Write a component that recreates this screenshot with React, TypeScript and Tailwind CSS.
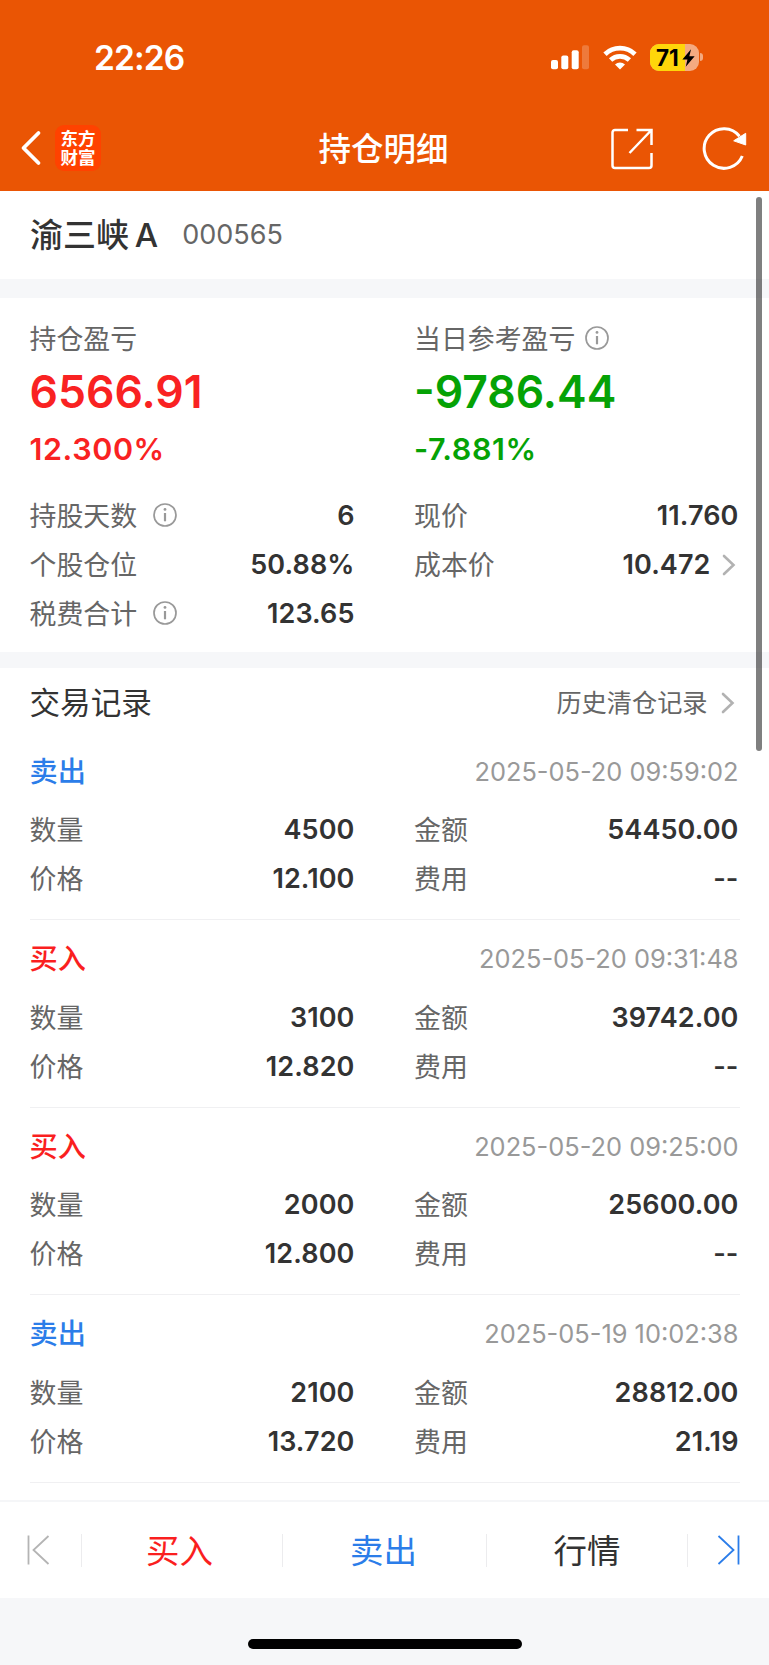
import type { ReactNode } from "react"
import clsx from "clsx"

interface TradeRecord {
  side: "buy" | "sell"
  time: string
  quantity: string
  amount: string
  price: string
  fee: string
}

const records: TradeRecord[] = [
  { side: "sell", time: "2025-05-20 09:59:02", quantity: "4500", amount: "54450.00", price: "12.100", fee: "--" },
  { side: "buy", time: "2025-05-20 09:31:48", quantity: "3100", amount: "39742.00", price: "12.820", fee: "--" },
  { side: "buy", time: "2025-05-20 09:25:00", quantity: "2000", amount: "25600.00", price: "12.800", fee: "--" },
  { side: "sell", time: "2025-05-19 10:02:38", quantity: "2100", amount: "28812.00", price: "13.720", fee: "21.19" },
]

function InfoIcon({ className }: { className?: string }) {
  return (
    <svg viewBox="0 0 24 24" className={clsx("w-6 h-6 shrink-0", className)} fill="none" stroke="#999">
      <circle cx="12" cy="12" r="11" strokeWidth="1.7" />
      <path d="M12 10v8.3" strokeWidth="2.2" />
      <circle cx="12" cy="6.4" r="1.4" fill="#999" stroke="none" />
    </svg>
  )
}

function Chevron({ className }: { className?: string }) {
  return (
    <svg
      viewBox="0 0 14 22"
      className={clsx("w-[14px] h-[22px] shrink-0 mr-1", className)}
      fill="none"
      stroke="#b2b2b2"
      strokeWidth="2.6"
      strokeLinecap="round"
    >
      <path d="M2 2l9.5 9L2 20" />
    </svg>
  )
}

function Row({ label, value, info, link }: { label: string; value: string; info?: boolean; link?: boolean }) {
  return (
    <div className="flex items-center h-[49px]">
      <span className="pt-px text-[26.9px] leading-[48px] text-[#666]">{label}</span>
      {info && <InfoIcon className="ml-4 -mt-px" />}
      <span className="ml-auto mr-px text-[27px] leading-[49px] font-semibold tracking-[0.1px] text-[#333]">{value}</span>
      {link && <Chevron className="ml-[10px]" />}
    </div>
  )
}

function StatusBar() {
  return (
    <div className="flex items-center h-[114px]">
      <span className="ml-[94px] pt-px text-[33.5px] leading-[40px] font-semibold tracking-[-0.9px]">22:26</span>
      <svg viewBox="0 0 40 26" className="w-10 h-[26px] ml-auto" fill="#fff">
        <rect x="1" y="16" width="7" height="9.3" rx="2" />
        <rect x="11.3" y="11.5" width="7" height="13.8" rx="2" />
        <rect x="21.7" y="6.3" width="7" height="19" rx="2" />
        <rect x="32" y="1.2" width="7" height="24.1" rx="2" opacity="0.22" />
      </svg>
      <svg viewBox="0 0 34 25" className="w-[34px] h-[25px] ml-[13px]" fill="none" stroke="#fff" strokeWidth="4.8">
        <path d="M2 9.2a21.8 21.8 0 0 1 30 0" />
        <path d="M7.6 15.1a13.8 13.8 0 0 1 18.8 0" />
        <path d="M17 24.6l-5-5.1a7.2 7.2 0 0 1 10 0z" fill="#fff" stroke="none" />
      </svg>
      <div className="relative flex items-center w-[49px] h-[27px] ml-[13px] rounded-[9px] overflow-hidden bg-[#f4aa81]">
        <div className="absolute inset-y-0 left-0 w-[35px] bg-[#ffd60a]" />
        <span className="relative ml-[6px] text-[22.5px] leading-[27px] font-bold text-black">71</span>
        <svg viewBox="0 0 12 17" className="absolute left-[31.5px] top-[5px] w-[13px] h-[18px]" fill="#000">
          <path d="M8.4.3L.2 9.8h4.8L3.4 16.7l8.4-9.8H6.8z" />
        </svg>
      </div>
      <div className="w-[3px] h-[8px] ml-[1px] mr-[66px] rounded-r-full bg-[#f4aa81]" />
    </div>
  )
}

function NavBar() {
  return (
    <div className="relative flex items-center h-[77px] pb-[9px]">
      <svg viewBox="0 0 22 36" className="w-[22px] h-9 ml-5" fill="none" stroke="#fff" strokeWidth="3.8" strokeLinecap="round" strokeLinejoin="round">
        <path d="M18.5 3L3.500 18l15 15" />
      </svg>
      <div className="flex flex-col items-center justify-center w-[46px] h-[46px] ml-[13px] rounded-[9px] bg-[#ff4200] text-[17.5px] leading-[19px] font-bold">
        <span>东方</span>
        <span>财富</span>
      </div>
      <h1 className="absolute inset-x-0 pt-[3px] pr-[2px] text-center text-[32.5px] leading-[68px] font-medium pointer-events-none">持仓明细</h1>
      <svg viewBox="0 0 42 42" className="w-[42px] h-[42px] ml-auto mt-px" fill="none" stroke="#fff" strokeWidth="2.5">
        <path d="M17 2H4a2.5 2.5 0 0 0-2.5 2.5v33A2.5 2.5 0 0 0 4 40h34a2.5 2.5 0 0 0 2.5-2.5V25" />
        <path d="M25.5 2h15v15M40 2.5L18.5 25" />
      </svg>
      <svg viewBox="0 0 46 44" className="w-[46px] h-11 ml-[49px] mr-[21px]" fill="none" stroke="#fff" strokeWidth="3">
        <path d="M40.3 30A19.8 19.8 0 1 1 37.500 10.200" />
        <path d="M43.700 7.300v11.700L31.700 14.800z" fill="#fff" stroke="#fff" strokeWidth="1" />
      </svg>
    </div>
  )
}

function Record({ record }: { record: TradeRecord }) {
  const isBuy = record.side === "buy"
  return (
    <div className="mx-[29.5px] h-[187.67px] pt-[12px] border-b border-[#f0f0f2]">
      <div className="flex items-center justify-between h-[54px] mb-[6.5px]">
        <span className={clsx("text-[28.2px] leading-[54px] font-medium", isBuy ? "text-[#fa1f1f]" : "text-[#2b7de9]")}>
          {isBuy ? "买入" : "卖出"}
        </span>
        <span className="mr-px text-[25.4px] leading-[54px] text-[#999]">{record.time}</span>
      </div>
      <div className="grid grid-cols-[326px_1fr] gap-x-[58.5px]">
        <Row label="数量" value={record.quantity} />
        <Row label="金额" value={record.amount} />
        <Row label="价格" value={record.price} />
        <Row label="费用" value={record.fee} />
      </div>
    </div>
  )
}

function Summary({ label, amount, percent, color, info }: { label: ReactNode; amount: string; percent: string; color: string; info?: boolean }) {
  return (
    <div>
      <div className="flex items-center h-10 text-[26.9px] leading-[38px] text-[#666]">
        <span className="pt-px">{label}</span>
        {info && <InfoIcon className="ml-[10px] -mt-px" />}
      </div>
      <p className={clsx("mt-[7px] h-[54px] text-[44.5px] leading-[54px] font-semibold", color)}>{amount}</p>
      <p className={clsx("mt-[10px] h-[41px] text-[30.5px] leading-10 font-semibold tracking-[0.6px]", color)}>{percent}</p>
    </div>
  )
}

export default function App() {
  return (
    <div className="relative flex flex-col w-[769px] h-[1665px] overflow-hidden bg-white font-['Inter','Noto_Sans_CJK_SC',sans-serif]">
      <header className="h-[191px] bg-[#ea5504] text-white shrink-0">
        <StatusBar />
        <NavBar />
      </header>

      <div className="flex items-center h-[88px] pl-[30px] shrink-0">
        <span className="text-[33px] leading-[88px] font-medium text-[#333] [word-spacing:-3px]">渝三峡 A</span>
        <span className="ml-[24px] text-[27px] leading-[88px] text-[#666]">000565</span>
      </div>

      <section className="h-[389px] px-[29.5px] pt-[20px] border-t-[19px] border-b-16 border-[#f6f7f9] shrink-0">
        <div className="grid grid-cols-[326px_1fr] gap-x-[58.5px]">
          <Summary label="持仓盈亏" amount="6566.91" percent="12.300%" color="text-[#f92222]" />
          <Summary label="当日参考盈亏" amount="-9786.44" percent="-7.881%" color="text-[#05a205]" info />
        </div>
        <div className="mt-[21px] grid grid-cols-[326px_1fr] gap-x-[58.5px]">
          <Row label="持股天数" value="6" info />
          <Row label="现价" value="11.760" />
          <Row label="个股仓位" value="50.88%" />
          <Row label="成本价" value="10.472" link />
          <Row label="税费合计" value="123.65" info />
        </div>
      </section>

      <section className="flex-1 min-h-0">
        <div className="flex items-center h-[64.5px] pt-[6px] ml-[29.5px] mr-[30.5px]">
          <h2 className="text-[30.6px] leading-[56px] text-[#333]">交易记录</h2>
          <span className="ml-auto text-[25.2px] leading-[56px] text-[#666]">历史清仓记录</span>
          <Chevron className="ml-[13px]" />
        </div>
        {records.map((record) => (
          <Record key={record.time} record={record} />
        ))}
      </section>

      <nav className="flex items-center h-[98px] border-t-2 border-[#f5f6f8] text-[33.5px] shrink-0">
        <div className="w-[81px] flex">
          <svg viewBox="0 0 24 32" className="w-6 h-8 ml-[26px]" fill="none" stroke="#b4b4b4" strokeWidth="1.8">
            <path d="M2.5 1.5v29M22.5 2L7.5 16l15 14" />
          </svg>
        </div>
        <div className="w-px h-[33px] bg-[#ececee]" />
        <div className="w-[200px] pt-[2px] text-center text-[#fa1f1f] pr-[5px]">买入</div>
        <div className="w-px h-[33px] bg-[#ececee]" />
        <div className="w-[203px] pt-[2px] text-center text-[#2b7de9] pr-[2px]">卖出</div>
        <div className="w-px h-[33px] bg-[#ececee]" />
        <div className="w-[200px] pt-[2px] text-center text-[#333]">行情</div>
        <div className="w-px h-[33px] bg-[#ececee]" />
        <svg viewBox="0 0 24 32" className="w-6 h-8 ml-[29px]" fill="none" stroke="#2b7de9" strokeWidth="1.8">
          <path d="M21.5 1.5v29M1.5 2l15 14-15 14" />
        </svg>
      </nav>

      <footer className="flex justify-center h-[67px] pt-[41px] bg-[#f6f7f9] shrink-0">
        <div className="w-[274px] h-[10px] rounded-full bg-black" />
      </footer>

      {/* scroll indicator */}
      <div className="absolute left-[756px] top-[197px] w-[6px] h-[554px] rounded-full bg-black/50" />
    </div>
  )
}
